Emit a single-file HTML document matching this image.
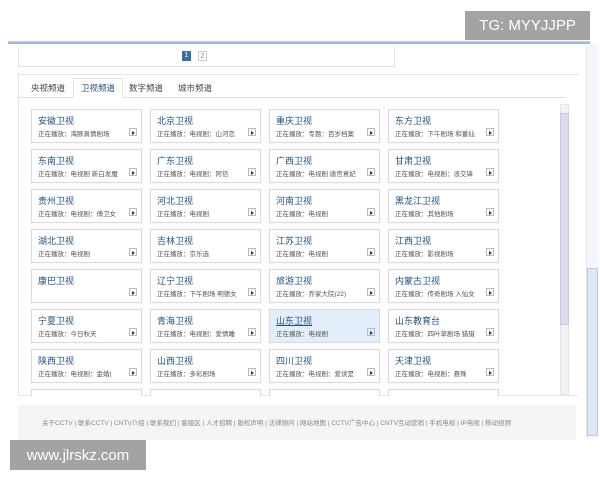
<!DOCTYPE html>
<html><head><meta charset="utf-8"><style>
*{margin:0;padding:0;box-sizing:border-box}
body{width:600px;height:480px;background:#fff;position:relative;overflow:hidden;font-family:"Liberation Sans","Noto Sans CJK SC",sans-serif;}
.abs{position:absolute}
.wm{background:#a3a3a3;color:#fff;font-size:15px;display:flex;align-items:center;justify-content:center}
#grid{position:absolute;left:31px;top:109px;width:470px;height:287px;overflow:hidden;display:grid;grid-template-columns:repeat(4,111px);column-gap:8px;grid-auto-rows:34px;row-gap:6px}
.c{border:1px solid #d6dbe3;background:#fff;position:relative;box-shadow:0 0 1px #e8e8e8}
.c b{position:absolute;left:6px;top:4px;font-size:9px;font-weight:normal;color:#27507f}
.c i{position:absolute;left:6px;top:18px;font-size:6.5px;font-style:normal;color:#555;white-space:nowrap}
.c s{position:absolute;right:4px;top:18px;width:8px;height:8px;border:1px solid #bbb;text-decoration:none}
.c s:after{content:"";position:absolute;left:2px;top:1.5px;border-left:3px solid #333;border-top:2px solid transparent;border-bottom:2px solid transparent}
.hl{background:#e3eefa}
.tab{position:absolute;top:82px;font-size:8.5px;color:#444}
</style></head><body>
<div class="abs wm" style="left:465px;top:11px;width:125px;height:29px">TG: MYYJJPP</div>
<div class="abs" style="left:8px;top:41px;width:582px;height:3px;background:linear-gradient(#c4d4e6,#8eaccb)"></div>
<div class="abs" style="left:18px;top:47px;width:377px;height:20px;border:1px solid #e2e2e2;border-top:none"></div>
<div class="abs" style="left:182px;top:51px;width:9px;height:10px;background:#3a6ea8;color:#fff;font-size:7px;text-align:center;line-height:10px">1</div>
<div class="abs" style="left:198px;top:51px;width:9px;height:10px;border:1px solid #ccc;color:#888;font-size:7px;text-align:center;line-height:9px">2</div>
<div class="abs" style="left:18px;top:74px;width:560px;height:322px;border:1px solid #e4e4e4;border-right:none"></div>
<div class="abs" style="left:18px;top:97px;width:548px;height:1px;background:#e0e0e0"></div>
<div class="abs" style="left:73px;top:78px;width:50px;height:20px;border:1px solid #e0e0e0;border-bottom:1px solid #fff;background:#fff"></div>
<div class="tab" style="left:31px">央视频道</div>
<div class="tab" style="left:81px;color:#27507f">卫视频道</div>
<div class="tab" style="left:129px">数字频道</div>
<div class="tab" style="left:178px">城市频道</div>
<div class="abs" style="left:560px;top:104px;width:9px;height:291px;background:#f3f3f6;border:1px solid #e4e4ea"></div>
<div class="abs" style="left:560px;top:113px;width:9px;height:212px;background:#dcdcee;border:1px solid #c9c9de"></div>
<div class="abs" style="left:586px;top:45px;width:12px;height:393px;background:#f4f6f9;border-left:1px solid #e2e6ec"></div>
<div class="abs" style="left:587px;top:268px;width:11px;height:168px;background:#dde8f4;border:1px solid #b8cbe0"></div>
<div id="grid">
<div class="c"><b>安徽卫视</b><i>正在播放：海豚真情剧场</i><s></s></div>
<div class="c"><b>北京卫视</b><i>正在播放：电视剧：山河恋</i><s></s></div>
<div class="c"><b>重庆卫视</b><i>正在播放：专题：百岁档案</i><s></s></div>
<div class="c"><b>东方卫视</b><i>正在播放：下午剧场 和番仙</i><s></s></div>
<div class="c"><b>东南卫视</b><i>正在播放：电视剧 新白发魔</i><s></s></div>
<div class="c"><b>广东卫视</b><i>正在播放：电视剧：阿信</i><s></s></div>
<div class="c"><b>广西卫视</b><i>正在播放：电视剧 唐宫意妃</i><s></s></div>
<div class="c"><b>甘肃卫视</b><i>正在播放：电视剧：浪交锋</i><s></s></div>
<div class="c"><b>贵州卫视</b><i>正在播放：电视剧：傅卫女</i><s></s></div>
<div class="c"><b>河北卫视</b><i>正在播放：电视剧</i><s></s></div>
<div class="c"><b>河南卫视</b><i>正在播放：电视剧</i><s></s></div>
<div class="c"><b>黑龙江卫视</b><i>正在播放：其他剧场</i><s></s></div>
<div class="c"><b>湖北卫视</b><i>正在播放：电视剧</i><s></s></div>
<div class="c"><b>吉林卫视</b><i>正在播放：京乐选</i><s></s></div>
<div class="c"><b>江苏卫视</b><i>正在播放：电视剧</i><s></s></div>
<div class="c"><b>江西卫视</b><i>正在播放：影视剧场</i><s></s></div>
<div class="c"><b>康巴卫视</b><s></s></div>
<div class="c"><b>辽宁卫视</b><i>正在播放：下午剧场 明德女</i><s></s></div>
<div class="c"><b>旅游卫视</b><i>正在播放：乔家大院(22)</i><s></s></div>
<div class="c"><b>内蒙古卫视</b><i>正在播放：传奇剧场 入仙女</i><s></s></div>
<div class="c"><b>宁夏卫视</b><i>正在播放：今日秋天</i><s></s></div>
<div class="c"><b>青海卫视</b><i>正在播放：电视剧：爱情睡</i><s></s></div>
<div class="c hl"><b style="text-decoration:underline">山东卫视</b><i>正在播放：电视剧</i><s></s></div>
<div class="c"><b>山东教育台</b><i>正在播放：四叶草剧场 猎猎</i><s></s></div>
<div class="c"><b>陕西卫视</b><i>正在播放：电视剧：金婚(</i><s></s></div>
<div class="c"><b>山西卫视</b><i>正在播放：多彩剧场</i><s></s></div>
<div class="c"><b>四川卫视</b><i>正在播放：电视剧：爱读是</i><s></s></div>
<div class="c"><b>天津卫视</b><i>正在播放：电视剧：悬殊</i><s></s></div>
<div class="c"></div><div class="c"></div><div class="c"></div><div class="c"></div>
</div>
<div class="abs" style="left:18px;top:405px;width:558px;height:35px;background:#f5f5f5"></div>
<div class="abs" style="left:42px;top:417px;font-size:6.5px;color:#888;white-space:nowrap">关于CCTV | 联系CCTV | CNTV介绍 | 联系我们 | 客服区 | 人才招聘 | 版权声明 | 法律顾问 | 网站地图 | CCTV广告中心 | CNTV互动营销 | 手机电视 | IP电视 | 移动视频</div>
<div class="abs wm" style="left:10px;top:440px;width:136px;height:30px">www.jlrskz.com</div>
</body></html>
